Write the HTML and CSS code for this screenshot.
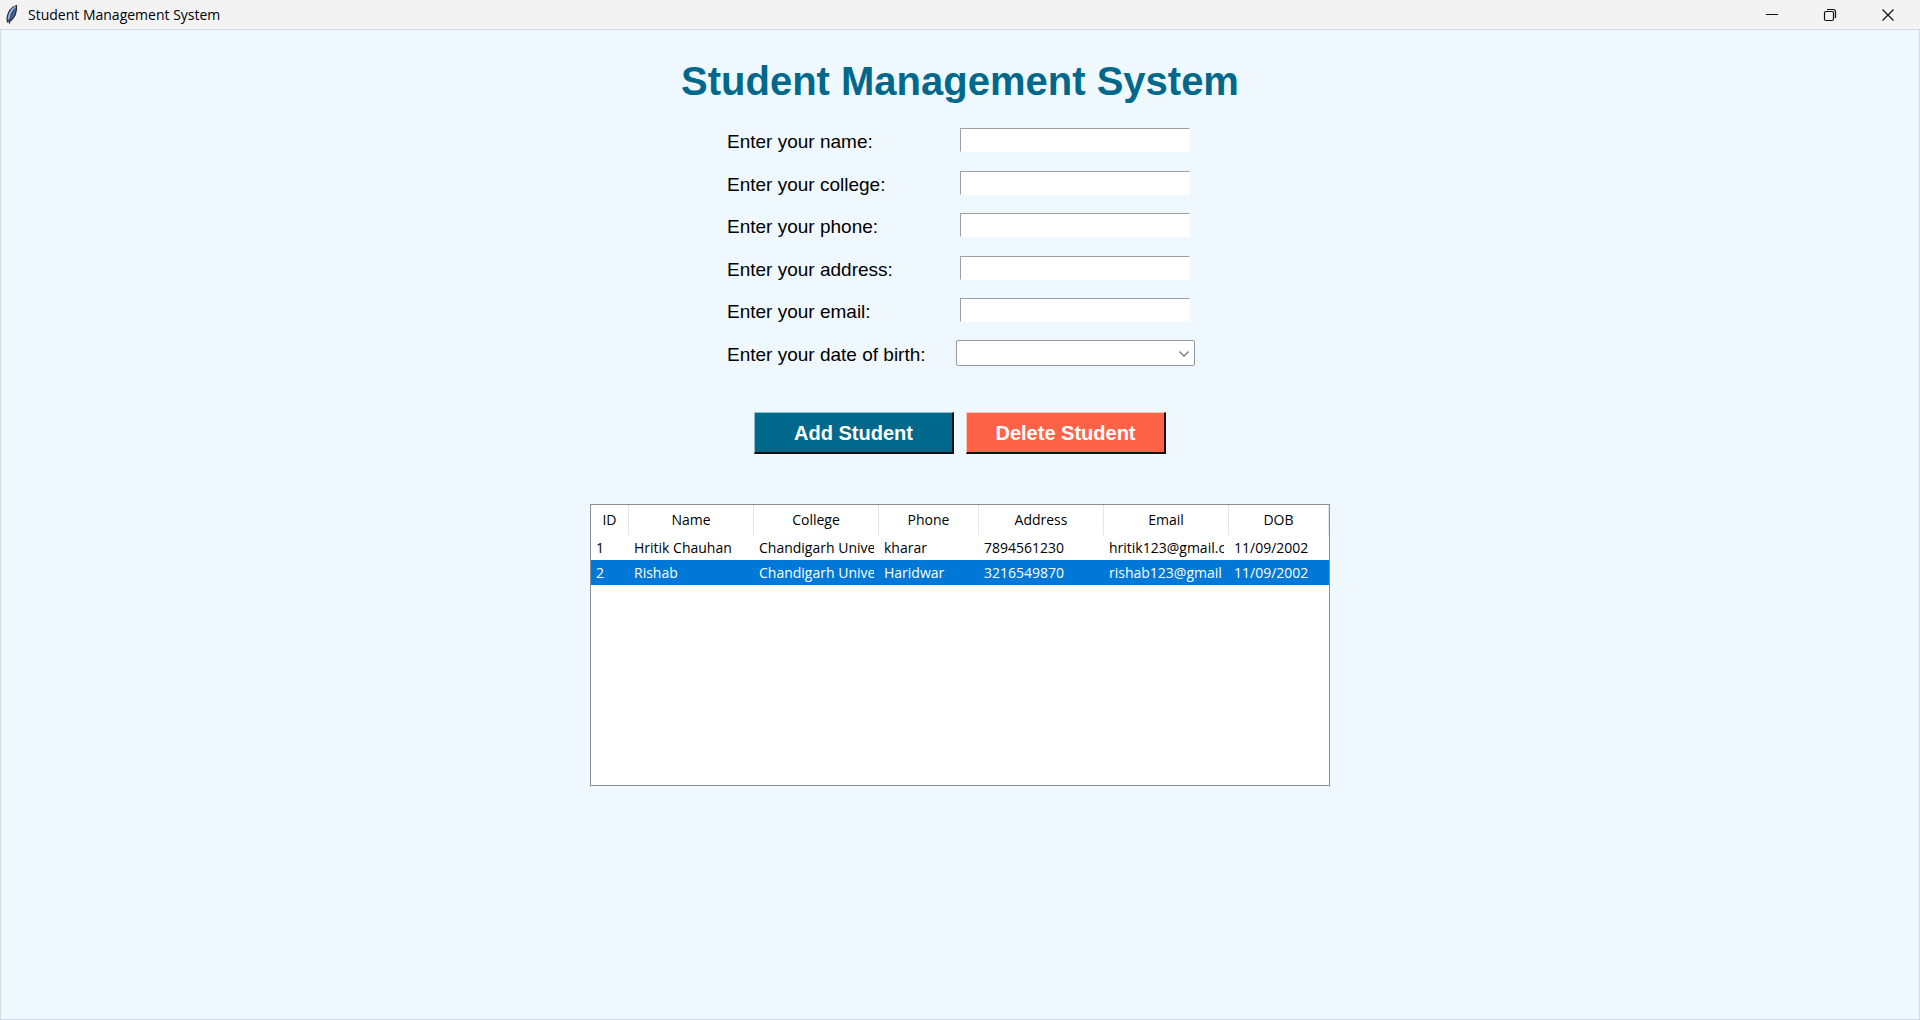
FILE: index.html
```html
<!DOCTYPE html>
<html lang="en">
<head>
<meta charset="utf-8">
<title>Student Management System</title>
<link rel="stylesheet" href="styles.css">
</head>
<body>
<header class="titlebar">
  <svg class="feather" width="16" height="22" viewBox="0 0 16 22" aria-hidden="true">
    <path d="M12.500 1.500C7.500 3 4 7.500 3 14.500L3.500 18L6.500 17C10 14 13 8 12.500 1.500Z" fill="#3f6fb0" stroke="#2b2b2f" stroke-width="1.200"/>
    <path d="M11.500 2.500C8 5 5 10 4.500 15" fill="none" stroke="#9fc4ee" stroke-width="1.400"/>
    <path d="M10.500 6L6 14.500L5.500 20" fill="none" stroke="#4b4540" stroke-width="1.100"/>
  </svg>
  <span class="caption">Student Management System</span>
  <button class="winbtn" type="button" aria-label="Minimize">
    <svg width="14" height="14" viewBox="0 0 14 14"><path d="M1 6.500H13" stroke="#111"/></svg>
  </button>
  <button class="winbtn" type="button" aria-label="Restore">
    <svg width="14" height="14" viewBox="0 0 14 14" fill="none" stroke="#111" stroke-width="1.200"><rect x="1.500" y="3.500" width="9" height="9" rx="1.500"/><path d="M4 1.500H10Q12.500 1.500 12.500 4V10"/></svg>
  </button>
  <button class="winbtn" type="button" aria-label="Close">
    <svg width="14" height="14" viewBox="0 0 14 14"><path d="M1.500 1.500L12.500 12.500M12.500 1.500L1.500 12.500" stroke="#111" stroke-width="1.200"/></svg>
  </button>
</header>
<main class="client">
  <h1 class="heading">Student Management System</h1>
  <form class="form">
    <div class="fields">
      <label for="name">Enter your name:</label><input class="entry" id="name" type="text">
      <label for="college">Enter your college:</label><input class="entry" id="college" type="text">
      <label for="phone">Enter your phone:</label><input class="entry" id="phone" type="text">
      <label for="address">Enter your address:</label><input class="entry" id="address" type="text">
      <label for="email">Enter your email:</label><input class="entry" id="email" type="text">
      <label for="dob">Enter your date of birth:</label>
      <div class="combo">
        <select class="combo-select" id="dob"><option></option></select>
        <svg class="chevron" width="12" height="8" viewBox="0 0 12 8" aria-hidden="true"><path d="M1.500 1.500L6 6L10.500 1.500" fill="none" stroke="#777" stroke-width="1.300"/></svg>
      </div>
    </div>
    <div class="actions">
      <button class="btn btn-add" type="button">Add Student</button>
      <button class="btn btn-delete" type="button">Delete Student</button>
    </div>
  </form>
  <div class="tree">
    <table class="grid">
      <colgroup><col class="c-id"><col class="c-wide"><col class="c-wide"><col class="c-mid"><col class="c-wide"><col class="c-wide"><col></colgroup>
      <thead>
        <tr><th>ID</th><th>Name</th><th>College</th><th>Phone</th><th>Address</th><th>Email</th><th>DOB</th></tr>
      </thead>
      <tbody>
        <tr><td><div>1</div></td><td><div>Hritik Chauhan</div></td><td><div>Chandigarh University</div></td><td><div>kharar</div></td><td><div>7894561230</div></td><td><div>hritik123@gmail.com</div></td><td><div>11/09/2002</div></td></tr>
        <tr class="selected"><td><div>2</div></td><td><div>Rishab</div></td><td><div>Chandigarh University</div></td><td><div>Haridwar</div></td><td><div>3216549870</div></td><td><div>rishab123@gmail</div></td><td><div>11/09/2002</div></td></tr>
      </tbody>
    </table>
  </div>
</main>
</body>
</html>
```
FILE: styles.css
```css
* { box-sizing: border-box; }
body {
  margin: 0;
  min-height: 100vh;
  display: flex;
  flex-direction: column;
  background: #f0f8ff;
  color: #000;
  font-family: "Open Sans", "Noto Sans", sans-serif;
  font-size: 14px;
}
.titlebar {
  display: flex;
  align-items: center;
  height: 29px;
  padding: 0 3px 0 4px;
  background: #f3f3f3;
}
.feather { margin-right: 8px; }
.caption { flex: 1; line-height: 20px; }
.winbtn {
  display: flex;
  align-items: center;
  justify-content: center;
  width: 58px;
  height: 28px;
  padding: 0;
  border: 0;
  background: transparent;
}
.client {
  flex: 1;
  display: flex;
  flex-direction: column;
  align-items: center;
  padding: 28px 20px 20px;
  border: 1px solid #d3dce4;
}
.heading {
  margin: 0;
  font: bold 40px/46px "Liberation Sans", Arial, sans-serif;
  color: #00688b;
}
.form {
  display: flex;
  flex-direction: column;
  align-items: center;
  font-family: "Liberation Sans", Arial, sans-serif;
  font-size: 19px;
}
.fields {
  display: grid;
  grid-template-columns: 220px 256px;
  grid-template-rows: repeat(6, 1fr);
  align-items: center;
  justify-items: start;
  min-height: 255px;
  margin-top: 15px;
  padding-left: 10px;
}
.fields label { padding-top: 4px; }
.entry {
  justify-self: center;
  width: 230px;
  height: 24px;
  border: 1px solid #fff;
  border-top-color: #a0a0a0;
  border-left-color: #a0a0a0;
  background: #fff;
}
.combo {
  position: relative;
  justify-self: center;
  display: flex;
}
.combo-select {
  appearance: none;
  width: 239px;
  height: 26px;
  border: 1px solid #999;
  border-radius: 2px;
  background: #fff;
}
.chevron {
  position: absolute;
  right: 5px;
  top: 10px;
  pointer-events: none;
}
.actions {
  display: flex;
  gap: 12px;
  margin-top: 38px;
}
.btn {
  width: 200px;
  height: 42px;
  padding: 0;
  border: 2px solid #111;
  border-width: 1px 2px 2px 1px;
  font: bold 20px/24px "Liberation Sans", Arial, sans-serif;
  color: #fff;
}
.btn-add { background: #00688b; border-top-color: #8fc0d0; border-left-color: #8fc0d0; }
.btn-delete { background: #ff6347; border-top-color: #ffc4b8; border-left-color: #ffc4b8; }
.tree {
  width: 740px;
  min-height: 282px;
  margin-top: 50px;
  border: 1px solid #8a8f99;
  background: #fff;
}
.grid {
  width: 100%;
  table-layout: fixed;
  border-collapse: separate;
  border-spacing: 0;
}
.c-id { width: 38px; }
.c-wide { width: 125px; }
.c-mid { width: 100px; }
.grid th {
  height: 30px;
  padding: 0;
  border-right: 1px solid #e5e5e5;
  font-weight: normal;
  line-height: 20px;
}
.grid td {
  height: 25px;
  padding: 0 5px;
  line-height: 20px;
}
.grid td div {
  overflow: hidden;
  white-space: nowrap;
}
.selected { background: #0078d7; color: #fff; }
```
